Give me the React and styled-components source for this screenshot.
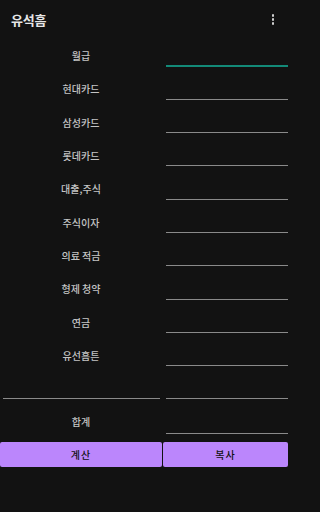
import React from "react";
import styled, { createGlobalStyle } from "styled-components";

const GlobalStyle = createGlobalStyle`
  html, body {
    margin: 0;
    padding: 0;
    background: #121212;
  }
  body {
    width: 288px;
    height: 512px;
    overflow: hidden;
    font-family: "Noto Sans CJK KR", "Noto Sans", sans-serif;
  }
`;

const Screen = styled.div`
  width: 288px;
  height: 512px;
  background: #121212;
  display: flex;
  flex-direction: column;
`;

const AppBar = styled.header`
  height: 39px;
  padding: 0 11px;
  display: flex;
  align-items: center;
  justify-content: space-between;
  box-sizing: border-box;
`;

const Title = styled.h1`
  margin: 0;
  font-size: 13px;
  font-weight: 700;
  color: #e6e6e6;
  letter-spacing: -0.2px;
`;

const Kebab = styled.div`
  display: flex;
  flex-direction: column;
  gap: 1.6px;
  margin-right: 3px;
  span {
    width: 2.4px;
    height: 2.4px;
    border-radius: 50%;
    background: #d0d0d0;
  }
`;

const Row = styled.div`
  display: grid;
  grid-template-columns: 162px 1fr;
  height: ${(p) => p.$height || "33.33px"};
`;

const Label = styled.div`
  display: flex;
  align-items: center;
  justify-content: center;
  font-size: 10px;
  font-weight: 500;
  color: #c4c4c4;
`;

const Field = styled.div`
  padding-top: ${(p) => p.$offset || "26px"};
  box-sizing: border-box;
`;

const Underline = styled.div`
  height: ${(p) => (p.$focused ? "2px" : "1px")};
  background: ${(p) => (p.$focused ? "#138a78" : "#8a8a8a")};
  margin: ${(p) => p.$margin || "0 0 0 4px"};
`;

const Divider = styled(Row)`
  height: 1px;
  margin-top: 25.5px;
  margin-bottom: 6.5px;
`;

const ButtonBar = styled.div`
  display: grid;
  grid-template-columns: 162px 1fr;
  gap: 1px;
  margin-top: 4px;
`;

const Button = styled.button`
  height: 25px;
  border: none;
  border-radius: 2px;
  background: #bb86fc;
  color: #111;
  font-family: inherit;
  font-size: 10px;
  font-weight: 500;
  letter-spacing: 1px;
  padding: 0;
`;

const fields = [
  "월급",
  "현대카드",
  "삼성카드",
  "롯데카드",
  "대출,주식",
  "주식이자",
  "의료 적금",
  "형제 청약",
  "연금",
  "유선흠튼",
];

export default function App() {
  return (
    <Screen>
      <GlobalStyle />
      <AppBar>
        <Title>유석흠</Title>
        <Kebab>
          <span />
          <span />
          <span />
        </Kebab>
      </AppBar>

      {fields.map((name, i) => (
        <Row key={name}>
          <Label>{name}</Label>
          <Field $offset={i === 0 ? "26px" : "26.5px"}>
            <Underline $focused={i === 0} />
          </Field>
        </Row>
      ))}

      <Divider>
        <Underline $margin="0 2px 0 3px" />
        <Underline />
      </Divider>

      <Row $height="33px">
        <Label>합계</Label>
        <Field $offset="27.5px">
          <Underline />
        </Field>
      </Row>

      <ButtonBar>
        <Button>계산</Button>
        <Button>복사</Button>
      </ButtonBar>
    </Screen>
  );
}
